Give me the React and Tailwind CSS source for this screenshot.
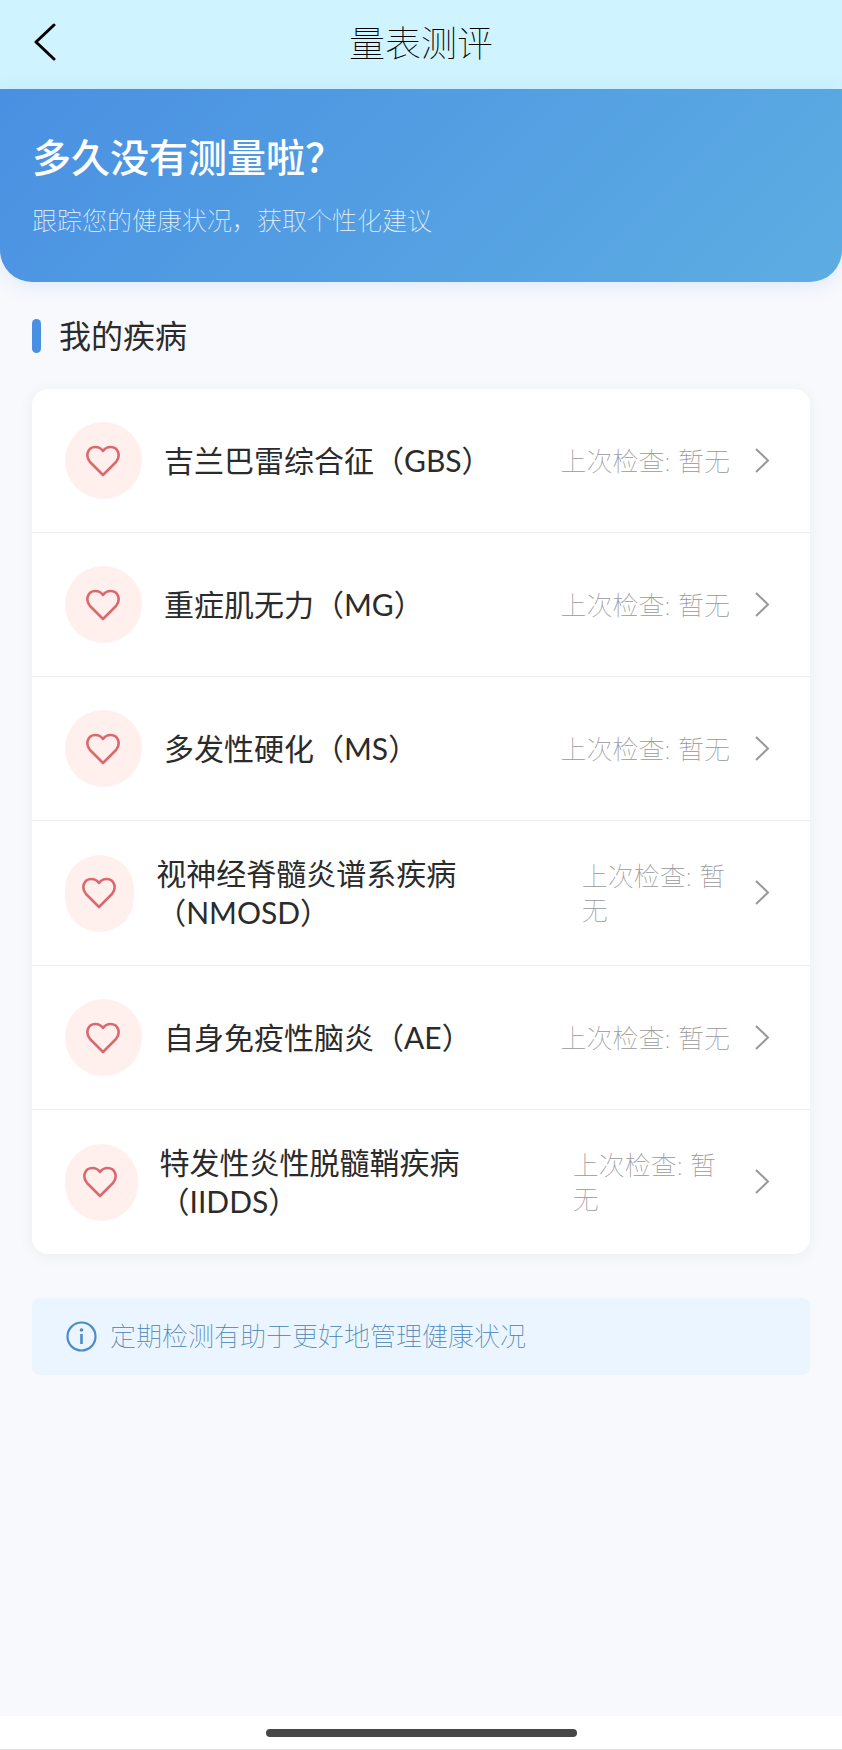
import React from "react";

const DISEASES = [
  { id: "gbs", name: "吉兰巴雷综合征（GBS）" },
  { id: "mg", name: "重症肌无力（MG）" },
  { id: "ms", name: "多发性硬化（MS）" },
  { id: "nmosd", name: "视神经脊髓炎谱系疾病（NMOSD）" },
  { id: "ae", name: "自身免疫性脑炎（AE）" },
  { id: "iidds", name: "特发性炎性脱髓鞘疾病（IIDDS）" },
];

export default function App() {
  return (
    <div className="flex min-h-screen flex-col bg-[#f8f9fd] font-['Lato','Noto_Sans_CJK_SC',sans-serif] text-[#2b2b2b]">
      <Header title="量表测评" />
      <Banner />

      <main className="flex-1 px-8">
        <h2 className="mt-8 flex items-center gap-[18px] text-[32px] leading-[44px]">
          <span className="h-[34px] w-[9px] rounded-full bg-[#4a90e2]" />
          我的疾病
        </h2>

        <ul className="mt-[31px] overflow-hidden rounded-2xl bg-white shadow-[0_2px_16px_rgba(0,0,0,0.05)]">
          {DISEASES.map((d) => (
            <DiseaseRow key={d.id} name={d.name} lastCheck="暂无" />
          ))}
        </ul>

        <p className="mt-11 flex items-center gap-3 rounded-lg bg-[#ebf5ff] px-[33px] py-[21px] text-[26px] leading-[35px] font-thin text-[#4682b4]">
          <InfoIcon />
          定期检测有助于更好地管理健康状况
        </p>
      </main>

      {/* 底部手势条 */}
      <footer className="flex h-[34px] items-center justify-center border-b border-[#e2e2e2] bg-white">
        <span className="h-2 w-[311px] rounded-full bg-[#474747]" />
      </footer>
    </div>
  );
}

function Header({ title }) {
  return (
    <header className="grid h-[89px] grid-cols-[1fr_auto_1fr] items-center bg-[#cff3ff] px-8 pb-1 text-black">
      <button aria-label="返回" className="w-fit">
        <svg width="26" height="40" viewBox="0 0 26 40" fill="none" stroke="currentColor" strokeWidth="3" strokeLinecap="round" strokeLinejoin="round">
          <path d="M22 2 4 19l18 17" />
        </svg>
      </button>
      <h1 className="text-[36px] leading-[44px] font-thin">{title}</h1>
    </header>
  );
}

function Banner() {
  return (
    <section className="rounded-b-[32px] bg-linear-135 from-[#4a90e2] to-[#5dade2] px-8 pt-[42px] pb-11 text-white shadow-[0_4px_20px_rgba(74,144,226,0.15)]">
      <h2 className="text-[39px] leading-[52px] font-medium">多久没有测量啦？</h2>
      <p className="mt-5 text-[25px] leading-[35px] font-thin text-white/90">跟踪您的健康状况，获取个性化建议</p>
    </section>
  );
}

function DiseaseRow({ name, lastCheck }) {
  return (
    <li className="border-b border-[#eeeeee] last:border-b-0">
      <button className="flex w-full items-center justify-between p-[33px] text-left">
        <span className="flex items-center">
          <span className="flex h-[77px] w-[77px] items-center justify-center rounded-full bg-[#fff0ee]">
            <HeartIcon />
          </span>
          <span className="ml-[22px] text-[30px] leading-[39px]">{name}</span>
        </span>
        <span className="flex items-center">
          <span className="text-[26px] leading-[34px] font-thin text-[#999999]">{`上次检查: ${lastCheck}`}</span>
          <ChevronIcon />
        </span>
      </button>
    </li>
  );
}

function HeartIcon() {
  return (
    <svg className="shrink-0" width="36" height="34" viewBox="0 0 36 34" fill="none" stroke="#d9696e" strokeWidth="2.6" strokeLinejoin="round">
      <path d="M17 31 4 18C-1 12 1.500 3 9.500 3c3.300 0 5.700 1.500 7.500 4 1.800-2.500 4.200-4 7.500-4C32.500 3 35 12 30 18Z" />
    </svg>
  );
}

function ChevronIcon() {
  return (
    <svg className="ml-[18px] shrink-0" width="29" height="30" viewBox="0 0 29 30" fill="none" stroke="#999999" strokeWidth="2">
      <path d="m8 3 12 11.500L8 26" />
    </svg>
  );
}

function InfoIcon() {
  return (
    <svg className="shrink-0" width="33" height="33" viewBox="0 0 33 33" fill="none" stroke="#4a8ccb" strokeWidth="2.200">
      <circle cx="16.500" cy="16.500" r="14" />
      <path d="M16.500 14v10" strokeWidth="2.600" />
      <circle cx="16.500" cy="10" r="1.800" fill="#4a8ccb" stroke="none" />
    </svg>
  );
}
